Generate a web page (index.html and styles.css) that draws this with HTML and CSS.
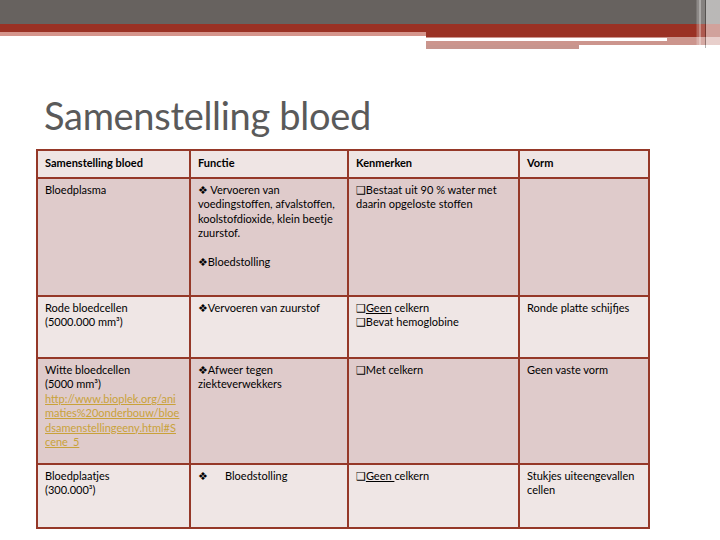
FILE: index.html
```
<!DOCTYPE html>
<html>
<head>
<meta charset="utf-8">
<link rel="stylesheet" href="styles.css">
</head>
<body>
<div class="slide">
  <div class="topbar">
    <div class="bar-gray"></div>
    <div class="bar-red"></div>
    <div class="bar-split">
      <div class="split-left"><div class="pale"></div></div>
      <div class="split-right">
        <div class="r-red"></div>
        <div class="r-pink"></div>
        <div class="r-line"><div class="r-white"></div><div class="r-fill"></div></div>
        <div class="r-pink r-thick"></div>
        <div class="r-short"></div>
      </div>
    </div>
    <div class="stripes"></div>
  </div>
  <h1 class="title">Samenstelling bloed</h1>
  <table class="grid">
    <colgroup>
      <col class="c1"><col class="c2"><col class="c3"><col class="c4">
    </colgroup>
    <tr class="head">
      <th>Samenstelling bloed</th>
      <th>Functie</th>
      <th>Kenmerken</th>
      <th>Vorm</th>
    </tr>
    <tr class="dark r1">
      <td><p>Bloedplasma</p></td>
      <td><p>❖ Vervoeren van voedingstoffen, afvalstoffen, koolstofdioxide, klein beetje zuurstof.</p><p class="gap">❖Bloedstolling</p></td>
      <td><p>❑Bestaat uit 90 % water met daarin opgeloste stoffen</p></td>
      <td></td>
    </tr>
    <tr class="light r2">
      <td>Rode bloedcellen<br>(5000.000 mm³)</td>
      <td>❖Vervoeren van zuurstof</td>
      <td>❑<span class="ul">Geen</span> celkern<br>❑Bevat hemoglobine</td>
      <td>Ronde platte schijfjes</td>
    </tr>
    <tr class="dark r3">
      <td>Witte bloedcellen<br>(5000 mm³)<br><a class="link" href="#">http://www.bioplek.org/ani<br>maties%20onderbouw/bloe<br>dsamenstellingeeny.html#S<br>cene_5</a></td>
      <td><p>❖Afweer tegen ziekteverwekkers</p></td>
      <td>❑Met celkern</td>
      <td>Geen vaste vorm</td>
    </tr>
    <tr class="light r4">
      <td>Bloedplaatjes<br>(300.000³)</td>
      <td><span class="tab">❖</span>Bloedstolling</td>
      <td>❑<span class="ul">Geen </span>celkern</td>
      <td>Stukjes uiteengevallen cellen</td>
    </tr>
  </table>
</div>
</body>
</html>
```
FILE: styles.css
```
html, body {
  margin: 0;
  padding: 0;
  background: #ffffff;
}
.slide {
  width: 720px;
  height: 540px;
  position: relative;
  overflow: hidden;
  font-family: Lato, "DejaVu Sans", sans-serif;
}
.topbar {
  position: relative;
}
.bar-gray {
  height: 24px;
  background: #67625f;
}
.bar-red {
  height: 8px;
  background: #9a3124;
}
.bar-split {
  display: flex;
}
.split-left {
  width: 426px;
}
.pale {
  height: 4px;
  background: #d5958c;
}
.split-right {
  flex: 1;
  display: flex;
  flex-direction: column;
}
.r-red {
  height: 5px;
  background: #9a3124;
}
.r-pink {
  height: 1px;
  background: #cc958d;
}
.r-thick {
  height: 4px;
}
.r-line {
  display: flex;
  height: 3px;
}
.r-white {
  width: 241px;
  background: #ffffff;
}
.r-fill {
  flex: 1;
  background: #cc958d;
}
.r-short {
  width: 153px;
  height: 4px;
  background: #c7958e;
}
.stripes {
  position: absolute;
  top: 0;
  right: 0;
  width: 24px;
  height: 48px;
  background: linear-gradient(to right,
    rgba(255,255,255,0) 0px, rgba(255,255,255,0.25) 1px, rgba(255,255,255,0.25) 3px,
    rgba(255,255,255,0.45) 3px, rgba(255,255,255,0.45) 5px,
    rgba(255,255,255,0.2) 5px, rgba(255,255,255,0.2) 9px,
    rgba(60,60,60,0.4) 9px, rgba(60,60,60,0.4) 10px,
    rgba(255,255,255,0.55) 10px, rgba(255,255,255,0.55) 24px);
}
.title {
  margin: 46px 0 0 44px;
  font-family: Lato, "Open Sans", sans-serif;
  font-weight: 400;
  font-size: 38px;
  line-height: 40px;
  color: #5a5a5a;
  letter-spacing: -0.3px;
}
.grid {
  margin: 14px 0 0 36px;
  border-collapse: collapse;
  table-layout: fixed;
  width: 612px;
  font-family: Lato, "DejaVu Sans", sans-serif;
  font-size: 11px;
  line-height: 14.4px;
  color: #000000;
}
.c1 { width: 153px; }
.c2 { width: 158px; }
.c3 { width: 171px; }
.c4 { width: 130px; }
.grid th, .grid td {
  border: 2px solid #953828;
  vertical-align: top;
  text-align: left;
  padding: 4px 6px 4px 7px;
  word-wrap: break-word;
}
.grid th {
  font-weight: 700;
  height: 17px;
  padding-top: 5px;
}
.head th { background: #efe5e4; }
.dark td { background: #dfcbcb; }
.light td { background: #efe6e5; }
.r1 td { height: 108px; }
.r2 td { height: 52px; }
.r3 td { height: 96px; }
.r4 td { height: 54px; }
.grid p {
  margin: 0;
}
.grid p.gap {
  margin-top: 14.4px;
}
.tab {
  display: inline-block;
  width: 27px;
}
.ul {
  text-decoration: underline;
}
.link {
  color: #c9a23a;
  text-decoration: underline;
}
```
